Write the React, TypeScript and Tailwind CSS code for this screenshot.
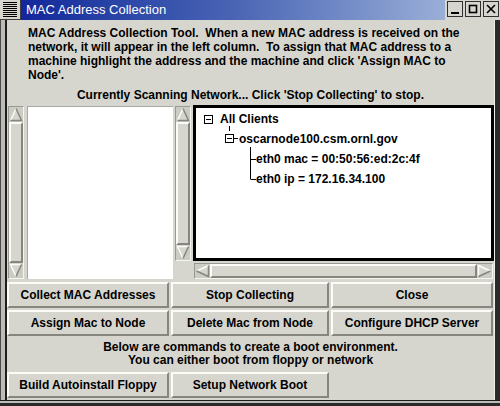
import React from "react";

const LIGHT = "#fbfbf7";
const DARK = "#86867f";

function Arrow({ dir, className = "" }: { dir: "up" | "down" | "left" | "right"; className?: string }) {
  const shapes = {
    up: { light: "M1.5 13.5 L7 1.5", dark: "M7 1.5 L12.5 13.5 L1.5 13.5", fill: "7,1.5 12.5,13.5 1.5,13.5" },
    down: { light: "M12.5 1.5 L1.5 1.5 L7 13.5", dark: "M7 13.5 L12.5 1.5", fill: "1.5,1.5 12.5,1.5 7,13.5" },
    left: { light: "M13.5 1.5 L1.5 7", dark: "M1.5 7 L13.5 12.5 L13.5 1.5", fill: "1.5,7 13.5,1.5 13.5,12.5" },
    right: { light: "M1.5 12.5 L1.5 1.5 L13.5 7", dark: "M13.5 7 L1.5 12.5", fill: "1.5,1.5 13.5,7 1.5,12.5" },
  }[dir];
  return (
    <svg width="15" height="15" viewBox="0 0 15 15" className={`shrink-0 ${className}`}>
      <polygon points={shapes.fill} fill="#d6d6ce" />
      <path d={shapes.light} stroke={LIGHT} strokeWidth="1.5" fill="none" />
      <path d={shapes.dark} stroke={DARK} strokeWidth="1.5" fill="none" />
    </svg>
  );
}

function VScroll({ className = "" }: { className?: string }) {
  return (
    <div className={`flex w-[16px] flex-col items-center border border-[#9a9a94] border-b-[#f4f4f0] border-r-[#f4f4f0] bg-[#cbccc4] ${className}`}>
      <Arrow dir="up" />
      <div className="w-[14px] flex-1 border-2 border-t-[#fbfbf7] border-l-[#fbfbf7] border-b-[#86867f] border-r-[#86867f] bg-[#d6d6ce]" />
      <Arrow dir="down" />
    </div>
  );
}

function HScroll({ className = "" }: { className?: string }) {
  return (
    <div className={`flex h-[16px] flex-row items-center border border-[#9a9a94] border-b-[#f4f4f0] border-r-[#f4f4f0] bg-[#cbccc4] ${className}`}>
      <Arrow dir="left" />
      <div className="h-[14px] flex-1 border-2 border-t-[#fbfbf7] border-l-[#fbfbf7] border-b-[#86867f] border-r-[#86867f] bg-[#d6d6ce]" />
      <Arrow dir="right" />
    </div>
  );
}

function Btn({ children }: { children: React.ReactNode }) {
  return (
    <button className="h-[26px] border-2 border-t-[#fbfbf7] border-l-[#fbfbf7] border-b-[#86867f] border-r-[#86867f] bg-[#d6d6ce] text-[12px] font-bold text-black">
      {children}
    </button>
  );
}

function Tree() {
  return (
    <div className="relative h-[156px] w-[301px] border-[3px] border-black bg-white">
      <svg className="absolute inset-0" width="295" height="150">
        <g stroke="black" strokeWidth="1" fill="white">
          <rect x="8.5" y="7.5" width="8" height="8" />
          <line x1="10" y1="11.5" x2="15" y2="11.5" />
          <line x1="33.5" y1="18" x2="33.5" y2="23" />
          <rect x="29.5" y="26.5" width="8" height="8" />
          <line x1="31" y1="30.5" x2="36" y2="30.5" />
          <line x1="38" y1="30.5" x2="42" y2="30.5" />
          <line x1="54.5" y1="39" x2="54.5" y2="71" />
          <line x1="54.5" y1="51.5" x2="60" y2="51.5" />
          <line x1="54.5" y1="71.5" x2="60" y2="71.5" />
        </g>
      </svg>
      <span className="absolute left-[24px] top-[4px] text-[12px] font-bold leading-[14px]">All Clients</span>
      <span className="absolute left-[43px] top-[24px] text-[12px] font-bold leading-[14px]">oscarnode100.csm.ornl.gov</span>
      <span className="absolute left-[60px] top-[44px] text-[12px] font-bold leading-[14px]">eth0 mac = 00:50:56:ed:2c:4f</span>
      <span className="absolute left-[60px] top-[64px] text-[12px] font-bold leading-[14px]">eth0 ip = 172.16.34.100</span>
    </div>
  );
}

function TitleBar() {
  return (
    <div className="flex h-[20px] shrink-0 bg-[#d6d6ce]">
      <div className="flex h-[20px] w-[21px] flex-col gap-px border-r border-b border-[#404040] px-[3px] pt-[2px]">
        {[0, 1, 2, 3, 4, 5, 6, 7].map((i) => (
          <div key={i} className="h-px bg-black" />
        ))}
      </div>
      <div className="flex flex-1 items-center bg-gradient-to-r from-[#14269a] via-[#4a64b4] to-[#9aaed6] pl-[5px] text-[13px] text-white">
        MAC Address Collection
      </div>
      <div className="flex w-[55px] items-start gap-[2px] pl-[2px] pt-px">
        {["min", "max", "close"].map((k) => (
          <div key={k} className="flex h-[16px] w-[16px] items-center justify-center border border-[#303030] bg-[#d6d6ce]">
            <svg width="12" height="12" viewBox="0 0 12 12">
              {k === "min" && <rect x="2" y="9" width="8" height="2" fill="black" />}
              {k === "max" && <rect x="2.5" y="2.5" width="7" height="7" fill="none" stroke="black" strokeWidth="1.6" />}
              {k === "close" && <path d="M2 2 L10 10 M10 2 L2 10" stroke="black" strokeWidth="1.6" />}
            </svg>
          </div>
        ))}
      </div>
    </div>
  );
}

export default function App() {
  return (
    <div className="flex h-[406px] w-[500px] flex-col bg-[#d6d6ce] font-['Liberation_Sans',Arial,sans-serif] text-black">
      <TitleBar />
      <div className="flex flex-1">
        <div className="w-[7px] border-l border-r-2 border-l-[#4a4a4a] border-r-[#1e1e1e] bg-[#bdbdb6]" />
        <div className="flex flex-1 flex-col pt-[6px]">
          <div className="whitespace-pre pl-[21px] text-[12px] font-bold leading-[14px]">
            <div>MAC Address Collection Tool.  When a new MAC address is received on the</div>
            <div>network, it will appear in the left column.  To assign that MAC address to a</div>
            <div>machine highlight the address and the machine and click 'Assign MAC to</div>
            <div>Node'.</div>
          </div>
          <div className="mt-[6px] whitespace-pre text-center text-[12px] font-bold leading-[14px]">
            Currently Scanning Network... Click 'Stop Collecting' to stop.
          </div>
          <div className="mt-[3px] flex h-[174px] pl-px">
            <div className="flex pt-px">
              <VScroll className="h-[173px]" />
              <div className="ml-[3px] h-[173px] w-[146px] border-t border-l border-[#a8a8a2] bg-white" />
            </div>
            <div className="ml-[2px] grid grid-cols-[16px_303px] grid-rows-[156px_18px]">
              <VScroll className="mt-px h-[155px]" />
              <div className="pl-[2px]">
                <Tree />
              </div>
              <div />
              <HScroll className="mt-[2px] ml-[3px] w-[299px]" />
            </div>
          </div>
          <div className="mt-[3px] grid grid-cols-[162px_158px_162px] gap-[2px]">
            <Btn>Collect MAC Addresses</Btn>
            <Btn>Stop Collecting</Btn>
            <Btn>Close</Btn>
            <Btn>Assign Mac to Node</Btn>
            <Btn>Delete Mac from Node</Btn>
            <Btn>Configure DHCP Server</Btn>
          </div>
          <div className="mt-[5px] text-center text-[12px] font-bold leading-[13px]">
            <div>Below are commands to create a boot environment.</div>
            <div>You can either boot from floppy or network</div>
          </div>
          <div className="mt-[5px] grid grid-cols-[162px_158px] gap-[2px]">
            <Btn>Build Autoinstall Floppy</Btn>
            <Btn>Setup Network Boot</Btn>
          </div>
        </div>
        <div className="w-[6px] border-l border-l-[#f0f0ea] bg-[#2a2a2a]" />
      </div>
      <div className="h-[6px] shrink-0 border-t border-t-[#1e1e1e] bg-[#bdbdb6]">
        <div className="mt-[2px] h-[3px] bg-[#2a2a2a]" />
      </div>
    </div>
  );
}
